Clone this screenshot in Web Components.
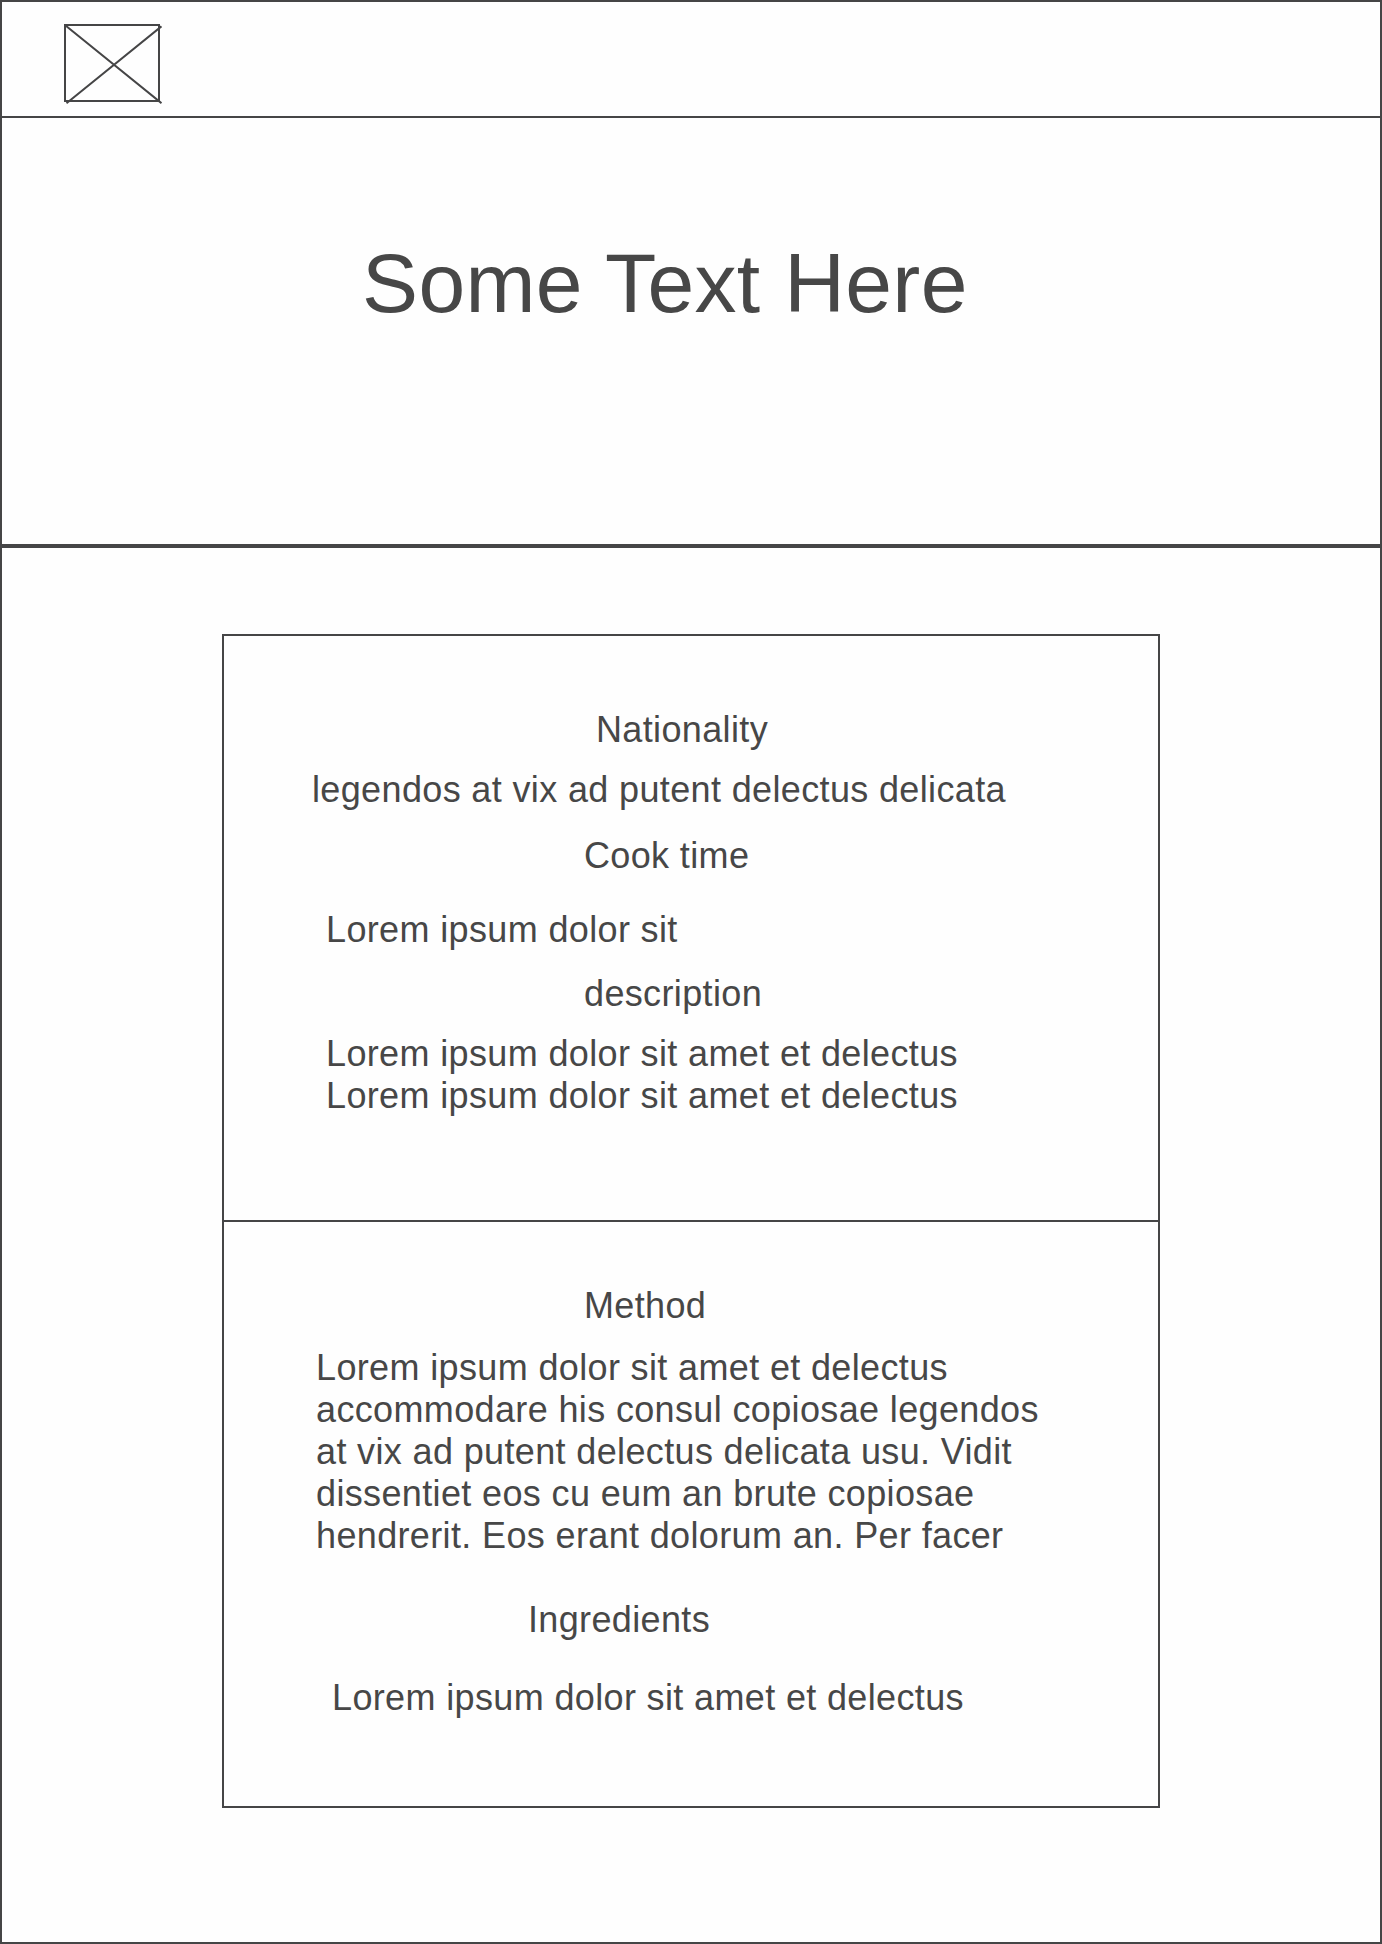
<!DOCTYPE html>
<html lang="en">
<head>
<meta charset="utf-8">
<title>Recipe wireframe</title>
<style>
  html, body { margin: 0; background: #fff; }
  body { font-family: "Liberation Sans", Arial, sans-serif; color: #474747; --line: #454546; }
</style>
</head>
<body>
<recipe-page>
  <site-header slot="header"><image-placeholder></image-placeholder></site-header>
  <hero-banner slot="hero">Some Text Here</hero-banner>
  <recipe-card>
    <recipe-section style="--top: 73px; height: 584px">
      <text-row kind="heading" style="--indent: 372px">Nationality</text-row>
      <text-row style="--indent: 88px; --gap: 18px">legendos at vix ad putent delectus delicata</text-row>
      <text-row kind="heading" style="--indent: 360px; --gap: 24px">Cook time</text-row>
      <text-row style="--indent: 102px; --gap: 32px">Lorem ipsum dolor sit</text-row>
      <text-row kind="heading" style="--indent: 360px; --gap: 22px">description</text-row>
      <text-row style="--indent: 102px; --gap: 18px">Lorem ipsum dolor sit amet et delectus<br>Lorem ipsum dolor sit amet et delectus</text-row>
    </recipe-section>
    <recipe-section divided style="--top: 63px; height: 584px">
      <text-row kind="heading" style="--indent: 360px">Method</text-row>
      <text-row style="--indent: 92px; --gap: 20px">Lorem ipsum dolor sit amet et delectus<br>accommodare his consul copiosae legendos<br>at vix ad putent delectus delicata usu. Vidit<br>dissentiet eos cu eum an brute copiosae<br>hendrerit. Eos erant dolorum an. Per facer</text-row>
      <text-row kind="heading" style="--indent: 304px; --gap: 42px">Ingredients</text-row>
      <text-row style="--indent: 108px; --gap: 36px">Lorem ipsum dolor sit amet et delectus</text-row>
    </recipe-section>
  </recipe-card>
</recipe-page>
<script>
  const define = (name, html, setup) => customElements.define(name, class extends HTMLElement {
    constructor() {
      super();
      this.attachShadow({ mode: "open" }).innerHTML = html;
    }
    connectedCallback() { if (setup) setup(this); }
  });

  define("recipe-page", `
    <style>
      :host { display: flex; flex-direction: column; box-sizing: border-box; width: 1382px; height: 1944px;
              border: 2px solid var(--line); background: #fefefe; }
      main { display: flex; justify-content: center; padding-top: 86px; }
    </style>
    <slot name="header"></slot>
    <slot name="hero"></slot>
    <main><slot></slot></main>`);

  define("site-header", `
    <style>
      :host { display: flex; box-sizing: border-box; height: 116px; padding: 22px 62px 0;
              border-bottom: 2px solid var(--line); }
    </style>
    <slot></slot>`);

  define("image-placeholder", `
    <style>
      :host { display: block; width: 98px; height: 80px; }
      svg { display: block; }
    </style>
    <svg width="98" height="80" viewBox="0 0 98 80" fill="none" stroke="#454546">
      <rect x="1" y="1" width="94" height="76" stroke-width="2"/>
      <path d="M1.5 1.5 97.5 79.2M2.5 79.2 97.5 2.4" stroke-width="2"/>
    </svg>`);

  define("hero-banner", `
    <style>
      :host { display: block; box-sizing: border-box; height: 430px; padding: 116px 0 0 360px;
              border-bottom: 4px solid var(--line); }
      h1 { margin: 0; font-size: 84px; line-height: 98px; font-weight: 400; letter-spacing: .36px; white-space: nowrap; }
    </style>
    <h1><slot></slot></h1>`);

  define("recipe-card", `
    <style>
      :host { display: flex; flex-direction: column; box-sizing: border-box; width: 938px; height: 1174px;
              border: 2px solid var(--line); }
    </style>
    <slot></slot>`);

  define("recipe-section", `
    <style>
      :host { display: flex; flex-direction: column; padding-top: var(--top); box-sizing: border-box; }
      :host([divided]) { border-top: 2px solid var(--line); flex: 1; }
    </style>
    <slot></slot>`);

  define("text-row", `
    <style>
      :host { display: block; padding-left: var(--indent, 0); margin-top: var(--gap, 0);
              font-size: 36px; line-height: 42px; letter-spacing: .36px; white-space: nowrap; }
    </style>
    <slot></slot>`, el => {
      if (el.getAttribute("kind") === "heading") {
        el.setAttribute("role", "heading");
        el.setAttribute("aria-level", "2");
      }
    });
</script>
</body>
</html>
